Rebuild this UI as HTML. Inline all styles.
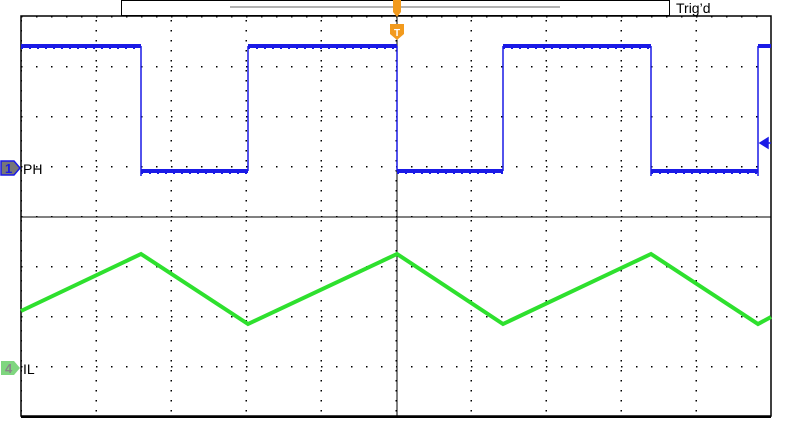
<!DOCTYPE html>
<html><head><style>
body{margin:0;background:#fff;width:800px;height:420px;overflow:hidden;font-family:"Liberation Sans",sans-serif}
</style></head><body>
<svg width="800" height="420" xmlns="http://www.w3.org/2000/svg">
<defs>
<pattern id="vd" x="0" y="16" width="75" height="10" patternUnits="userSpaceOnUse"><rect x="20.5" y="4" width="1.5" height="1.5" fill="#000"/></pattern>
<pattern id="hd" x="21" y="0" width="15" height="50" patternUnits="userSpaceOnUse"><rect x="0" y="16" width="1.5" height="1.5" fill="#000"/></pattern>
</defs>
<rect x="21" y="16" width="750" height="401" fill="url(#vd)"/>
<rect x="21" y="16" width="750" height="401" fill="url(#hd)"/>
<line x1="21" y1="217" x2="771" y2="217" stroke="#000" stroke-width="1"/>
<line x1="397" y1="16" x2="397" y2="417" stroke="#000" stroke-width="1"/>
<rect x="21" y="16" width="750" height="400" fill="none" stroke="#000" stroke-width="1.5"/>
<line x1="21" y1="417" x2="771" y2="417" stroke="#000" stroke-width="2"/>
<rect x="121.5" y="0.5" width="548" height="15" fill="#fff" stroke="#000"/>
<line x1="230" y1="7" x2="560" y2="7" stroke="#666" stroke-width="1"/>
<text x="676" y="13" font-size="14" fill="#000">Trig’d</text>
<path d="M393 0h8v12l-4 5l-4-5z" fill="#f29a1d"/>
<path d="M390 24h14v10l-7 6l-7-6z" fill="#f29a1d"/>
<text x="397" y="36" font-size="10" fill="#fff" text-anchor="middle" font-weight="bold">T</text>
<g stroke="#1a1ae6" fill="none">
<path d="M21 46H141M248 46H397M503 46H651M758 46H771M141 171H248M397 171H503M651 171H758" stroke-width="4"/>
<path d="M141 46V176M248 171V46M397 46V171M503 171V46M651 46V176M758 176V46" stroke-width="1.5"/>
<path d="M21 48H141M248 48H397M503 48H651M141 173H248M397 173H503M651 173H758" stroke-width="2" stroke-dasharray="2 6"/>
</g>
<path d="M760 143l8-5v10z M764 143h7" fill="#1a1ae6" stroke="#1a1ae6" stroke-width="1.5"/>
<path d="M21 311L141 254L248 324L397 254L503 324L651 254L758 324L771 317" fill="none" stroke="#2ee02e" stroke-width="4"/>
<path d="M1 161h13l6 7l-6 7h-13z" fill="#777" stroke="#1a1ae6" stroke-width="1.5"/>
<text x="5" y="173" font-size="13" fill="#1a1ae6" font-weight="bold">1</text>
<text x="23" y="174" font-size="14" fill="#000">PH</text>
<path d="M1 361h13l6 7l-6 7h-13z" fill="#7fd67f"/>
<text x="5" y="373" font-size="13" fill="#888" font-weight="bold">4</text>
<text x="23" y="374" font-size="14" fill="#000">IL</text>
</svg>
</body></html>
